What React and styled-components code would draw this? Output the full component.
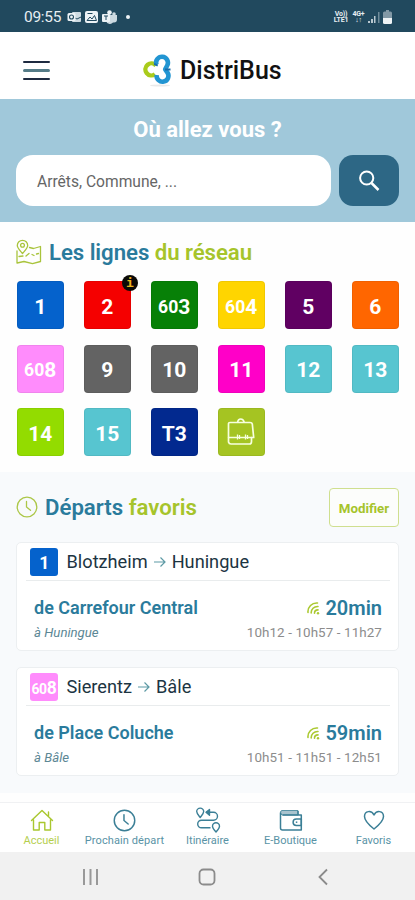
import React from 'react'
import styled, { createGlobalStyle } from 'styled-components'

const GlobalStyle = createGlobalStyle`
  * {
    box-sizing: border-box;
  }
  body {
    margin: 0;
    background: #fff;
    font-family: Roboto, 'Liberation Sans', sans-serif;
  }
`

const Screen = styled.div`
  width: 415px;
  height: 900px;
  display: flex;
  flex-direction: column;
  overflow: hidden;
  background: #fefefe;
`

const StatusBar = styled.div`
  height: 32px;
  padding: 2px 23px 0 24px;
  display: flex;
  align-items: center;
  justify-content: space-between;
  background: #21495e;
  color: #e6eef2;
`
const StatusGroup = styled.div`
  display: flex;
  align-items: center;
  gap: ${(props) => props.$gap}px;
`
const Clock = styled.span`
  width: 38px;
  font-size: 15.5px;
  line-height: 18px;
  letter-spacing: -0.3px;
`
const Volte = styled.div`
  width: ${(props) => props.$width}px;
  font-size: 7px;
  font-weight: 700;
  line-height: 6.5px;
  letter-spacing: -0.2px;
  text-align: center;
`

const Header = styled.header`
  height: 67px;
  padding: 0 23px;
  display: grid;
  grid-template-columns: 120px auto 1fr;
  align-items: center;
  background: #fff;
`
const MenuButton = styled.button`
  width: 27px;
  height: 20px;
  margin-top: 10px;
  padding: 0;
  border: 0;
  background: none;
  display: flex;
  flex-direction: column;
  justify-content: space-between;
`
const MenuLine = styled.span`
  height: 2.4px;
  border-radius: 2px;
  background: ${(props) => props.$color};
`
const Brand = styled.div`
  margin-top: 10px;
  display: flex;
  align-items: center;
  gap: 5px;
  color: #111;
  font-size: 25px;
  font-weight: 500;
  line-height: 30px;
`

const Hero = styled.section`
  height: 123px;
  padding: 17px 16px 0;
  background: #a0c8da;
`
const HeroTitle = styled.h1`
  margin: 0 0 13px;
  color: #fff;
  font-size: 22px;
  font-weight: 700;
  line-height: 27px;
  height: 26px;
  text-align: center;
`
const SearchRow = styled.div`
  display: flex;
  gap: 8px;
`
const SearchInput = styled.div`
  flex: 1;
  height: 51px;
  padding: 2px 21px 0;
  display: flex;
  align-items: center;
  border-radius: 17px;
  background: #fff;
  color: #666;
  font-size: 15.6px;
`
const SearchButton = styled.button`
  width: 60px;
  height: 51px;
  padding: 1px 0 0;
  border: 0;
  border-radius: 14px;
  background: #2d6785;
  color: #fff;
  display: flex;
  align-items: center;
  justify-content: center;
`

const Lines = styled.section`
  height: 250px;
  padding: 16px 16px 0;
`
const SectionTitle = styled.h2`
  margin: 0;
  display: flex;
  align-items: center;
  gap: 7px;
  color: #2a7b9c;
  font-size: 22.2px;
  font-weight: 600;
  line-height: 28px;
  letter-spacing: ${(props) => props.$spacing || 0}px;

  em {
    color: #a6c42b;
    font-style: normal;
  }
`
const LineGrid = styled.div`
  margin: 15px 0 0 0.5px;
  display: grid;
  grid-template-columns: repeat(6, 47.5px);
  justify-content: space-between;
  row-gap: 15.5px;
`
const LineTile = styled.div`
  position: relative;
  height: 48px;
  display: flex;
  align-items: center;
  justify-content: center;
  border-radius: 4px;
  background: ${(props) => props.$color};
  box-shadow: inset 0 0 0 1px rgba(0, 0, 0, 0.06);
  color: #fff;
  padding-top: ${(props) => (props.$icon ? 0 : 3)}px;
  font-size: 21px;
  font-weight: 700;
  line-height: 24px;
`
const Prefix = styled.span`
  font-size: 0.84em;
`
const InfoBadge = styled.span`
  position: absolute;
  top: -6px;
  right: -7px;
  width: 16px;
  height: 16px;
  border-radius: 50%;
  background: #0b0a06;
  color: #e8b51c;
  font-family: 'DejaVu Sans Mono', monospace;
  font-size: 13px;
  font-weight: 700;
  line-height: 15px;
  text-align: center;
`

const Departures = styled.section`
  height: 321px;
  padding: 16px 16px 0;
  background: #f8fafc;
`
const DeparturesHead = styled.div`
  height: 38px;
  margin-bottom: 16px;
  display: flex;
  align-items: center;
  justify-content: space-between;
`
const EditButton = styled.button`
  width: 70px;
  height: 39px;
  padding: 2px 0 0;
  border: 1px solid #cfdf8f;
  border-radius: 4px;
  background: #fcfdfb;
  color: #a6c42b;
  font-family: inherit;
  font-size: 13.3px;
  font-weight: 700;
`
const Card = styled.article`
  height: 109px;
  margin-bottom: 16px;
  padding: 0 8px 0 9px;
  border: 1px solid #eceff1;
  border-radius: 5px;
  background: #fff;
`
const CardHead = styled.div`
  height: 38px;
  padding-left: 4px;
  display: flex;
  align-items: center;
  border-bottom: 1px solid #e9eced;
  color: #1c3442;
  font-size: 18.2px;
  line-height: 22px;
`
const SmallTile = styled.span`
  width: 28px;
  height: 28px;
  margin-right: 8.5px;
  padding-top: 2px;
  display: flex;
  align-items: baseline;
  justify-content: center;
  border-radius: 3px;
  background: ${(props) => props.$color};
  color: #fff;
  font-size: 17.5px;
  font-weight: 700;
  line-height: 26px;
  letter-spacing: -0.3px;

  ${Prefix} {
    font-size: 14px;
  }
`
const Direction = styled.svg`
  width: 12px;
  height: 12px;
  margin: 0 6px;
`
const CardBody = styled.div`
  padding: 15px 8px 0;
  display: grid;
  grid-template-columns: 1fr auto;
  row-gap: 3px;
  align-items: center;
`
const Stop = styled.div`
  color: #2a7b9c;
  font-size: 18px;
  font-weight: 600;
  line-height: 24px;
`
const Wait = styled.div`
  display: flex;
  align-items: center;
  gap: 5px;
  justify-content: flex-end;
  color: #2a7b9c;
  font-size: 20px;
  font-weight: 600;
  line-height: 24px;
`
const Towards = styled.div`
  color: #5c8795;
  font-size: 13.2px;
  font-style: italic;
  line-height: 20px;
`
const Times = styled.div`
  color: #8c8c8c;
  font-size: 13.4px;
  line-height: 20px;
  letter-spacing: 0.1px;
`

const TabBar = styled.nav`
  height: 50px;
  margin-top: 9px;
  padding-top: 5px;
  border-top: 1px solid #f0f1f3;
  display: grid;
  grid-template-columns: repeat(5, 83px);
  background: #fff;
`
const Tab = styled.div`
  display: flex;
  flex-direction: column;
  align-items: center;
  color: ${(props) => (props.$active ? '#a9c72f' : '#3b7f96')};
  font-size: 11px;
  line-height: 12px;
  letter-spacing: ${(props) => props.$spacing || 0}px;
  white-space: nowrap;

  span {
    opacity: 0.85;
  }
`
const TabIcon = styled.div`
  height: 27px;
  padding-bottom: 3px;
  display: flex;
  align-items: center;
`
const SystemBar = styled.div`
  height: 48px;
  padding: 1px 1px 0 0;
  display: flex;
  align-items: center;
  justify-content: center;
  gap: 99px;
  background: #f1f1f1;
`

const lines = [
  { name: '1', color: '#0562cc' },
  { name: '2', color: '#f50000', info: true },
  { prefix: '60', name: '3', color: '#078007' },
  { prefix: '60', name: '4', color: '#ffd500' },
  { name: '5', color: '#600062' },
  { name: '6', color: '#ff6600' },
  { prefix: '60', name: '8', color: '#ff8cfc' },
  { name: '9', color: '#636363' },
  { name: '10', color: '#636363' },
  { name: '11', color: '#ff00c8' },
  { name: '12', color: '#57c5d0' },
  { name: '13', color: '#57c5d0' },
  { name: '14', color: '#93dc00' },
  { name: '15', color: '#57c5d0' },
  { name: 'T3', color: '#02298f' },
  { school: true, color: '#a5c422' },
]

const favorites = [
  {
    line: '1', color: '#0562cc', from: 'Blotzheim', to: 'Huningue',
    stop: 'de Carrefour Central', wait: '20min', times: '10h12 - 10h57 - 11h27',
  },
  {
    prefix: '60', line: '8', color: '#ff8cfc', from: 'Sierentz', to: 'Bâle',
    stop: 'de Place Coluche', wait: '59min', times: '10h51 - 11h51 - 12h51',
  },
]

const StatusIcons = () => (
  <svg width="65" height="16" viewBox="0 0 65 16" fill="none">
    <rect x="6" y="3" width="9" height="10" rx="1" fill="#cddae1" />
    <path d="M7 8l4 2 4-2" stroke="#21495e" />
    <rect x="1.500" y="4" width="8" height="8" rx="1.500" fill="#edf3f6" />
    <circle cx="5.500" cy="8" r="2" stroke="#21495e" strokeWidth="1.100" />
    <rect x="19" y="2" width="13" height="12" rx="2" fill="#edf3f6" />
    <path d="M21 11.500l3-3.500 2 2 2.500-3.500 2 5zM21.500 4.500h5" stroke="#21495e" strokeWidth="1" />
    <circle cx="43.500" cy="3.500" r="2.300" fill="#edf3f6" />
    <circle cx="48" cy="5" r="1.800" fill="#cddae1" />
    <path d="M40 6h11v4.500a3 3 0 0 1-3 3h-1a4 4 0 0 1-7-2z" fill="#cddae1" />
    <rect x="36" y="5" width="8" height="8" rx="1" fill="#edf3f6" />
    <path d="M38 7h4M40 7v4" stroke="#21495e" />
    <circle cx="62" cy="8" r="2" fill="#edf3f6" />
  </svg>
)

const SignalIcon = () => (
  <svg width="12" height="13" viewBox="0 0 12 13">
    <path d="M0 12v-2h2v2zM3 12V8h2v4zM6 12V5h1.500v7z" fill="#b9c8d0" />
    <path d="M10 12V1h1.500v11z" fill="#6f8b9a" />
  </svg>
)

const BatteryIcon = () => (
  <svg width="9" height="14" viewBox="0 0 9 14">
    <path d="M3 0h3v1.500h1.500Q9 1.500 9 3v5H0V3q0-1.500 1.500-1.500H3z" fill="#8299a6" />
    <path d="M0 8h9v4.500Q9 14 7.500 14h-6Q0 14 0 12.500z" fill="#eef3f5" />
  </svg>
)

const Logo = () => (
  <svg width="32" height="33" viewBox="0 0 32 33" fill="none">
    <ellipse cx="17" cy="31.500" rx="10" ry="1" fill="#e9e9e9" />
    <path d="M13 11.500A6 6 0 1 0 12 20.200" stroke="#aacb1b" strokeWidth="4.400" />
    <path d="M13.500 10.800A5.900 5.900 0 1 1 24.200 11.500L22.200 15.400L24.600 18.800A5.900 5.900 0 1 1 13.700 21" stroke="#2295d2" strokeWidth="4.600" strokeLinejoin="round" />
    <path d="M22 15.500h5.500M11.200 9.800l3.500 1.800" stroke="#186caa" strokeWidth="1.800" />
  </svg>
)

const SearchIcon = () => (
  <svg width="22" height="22" viewBox="0 0 22 22" fill="none" stroke="#fff" strokeWidth="2">
    <circle cx="8.700" cy="8" r="6.600" />
    <path d="M13.500 13l7 7" strokeWidth="2.500" />
  </svg>
)

const MapIcon = () => (
  <svg width="26" height="26" viewBox="0 0 26 26" fill="none" stroke="#a9c43c" strokeWidth="1.300" strokeLinejoin="round" strokeLinecap="round">
    <path d="M6.500 14.500C3.500 11 1.300 9 1.300 6.500a5.200 5.200 0 0 1 10.400 0c0 2.500-2.200 4.500-5.200 8z" />
    <circle cx="6.500" cy="6.200" r="1.900" />
    <path d="M1 12v12l7-1.500 8.500 2.200 8-2.200V7.500l-7 2-4-1" />
    <path d="M3 17.500l4-.5M10 17l3-2.500M16 15.500l2 1M20.500 15l2-.5" />
  </svg>
)

const ClockIcon = ({ size = 22, color = '#acc748', width = 1.3 }) => (
  <svg width={size} height={size} viewBox="0 0 22 22" fill="none" stroke={color} strokeWidth={width} strokeLinecap="round">
    <circle cx="11" cy="11" r="9.800" />
    <path d="M10.500 5.500V11l4 3.300" />
  </svg>
)

const SchoolBagIcon = () => (
  <svg width="28" height="28" viewBox="0 0 28 28" fill="none" stroke="#f7ffdf" strokeWidth="1.700" strokeLinejoin="round">
    <path d="M10.500 4.500Q11 1 13.700 1t3.500 3.500" />
    <path d="M1.500 19.500V5.500Q1.500 4.500 3 4.500h20q2 0 2.300 1.500l1.400 13.500h-2.500" />
    <path d="M3 19.500h21.500v4q0 2.500-2 2.500H4q-2 0-2.500-2v-4.500z" />
    <path d="M8.500 19.500M10.500 16.500v5M12.500 17v4M18.500 16.500v5M20.500 17v4" strokeWidth="1.300" />
  </svg>
)

const LiveIcon = () => (
  <svg width="13" height="14" viewBox="0 0 13 14" fill="none" stroke="#abc931" strokeWidth="1.600" strokeLinecap="round">
    <path d="M1 11.500C.5 6 5 1.500 10.500 2M4.200 12c-.2-3.800 2.800-6.700 6.800-6.500M7.500 12.300c0-2 1.400-3.400 3.500-3.400" />
    <circle cx="11" cy="12.200" r="1.200" fill="#abc931" stroke="none" />
  </svg>
)

const HomeIcon = () => (
  <svg width="24" height="24" viewBox="0 0 24 24" fill="none" stroke="currentColor" strokeWidth="1.400" strokeLinejoin="round" strokeLinecap="round">
    <path d="M1.500 12.500L12 2.500l10.500 10M3.500 11.500v10.500h5.700v-7.500h5.600V22h5.700V11.500M18.500 4v4" />
  </svg>
)

const RouteIcon = () => (
  <svg width="26" height="26" viewBox="0 0 26 26" fill="none" stroke="currentColor" strokeWidth="1.400" strokeLinejoin="round">
    <path d="M5.200 10.500C3 7.800 1.700 6.500 1.700 4.600a3.500 3.500 0 0 1 7 0c0 1.900-1.300 3.200-3.500 5.900z" />
    <path d="M21 25c-2.200-2.600-3.500-4-3.500-5.800a3.500 3.500 0 0 1 7 0c0 1.800-1.300 3.200-3.500 5.800z" />
    <path d="M11 5.200h7.500a4 4 0 0 1 0 8H6.500a3.700 3.700 0 0 0 0 7.600h9" />
    <path d="M14.500 2.500l-3.500 2.700 3.500 3z" fill="currentColor" />
  </svg>
)

const WalletIcon = () => (
  <svg width="24" height="24" viewBox="0 0 24 24" fill="none" stroke="currentColor" strokeWidth="1.500" strokeLinejoin="round">
    <path d="M3 2.500h16v4.500H3.500Q1.500 6.500 1.500 4.500T3 2.500z" fill="#a9c3ce" strokeWidth="0.800" />
    <path d="M1.500 4.500v15.500q0 2 2 2h18.800V7H3.500M19 3v4" />
    <path d="M22.300 11h-5a3.200 3.200 0 0 0 0 6.400h5z" />
    <path d="M16.800 14.200h1.500" />
  </svg>
)

const HeartIcon = () => (
  <svg width="24" height="24" viewBox="0 0 24 24" fill="none" stroke="currentColor" strokeWidth="1.500" strokeLinejoin="round">
    <path d="M12 21C7 17 2.500 12.800 2.500 8.500 2.500 2.700 9.500 1.800 12 7c2.500-5.200 9.500-4.300 9.500 1.500 0 4.300-4.500 8.500-9.500 12.500z" />
  </svg>
)

const Favorite = (props) => {
  return (
    <Card>
      <CardHead>
        <SmallTile $color={props.color}>
          {props.prefix && <Prefix>{props.prefix}</Prefix>}
          {props.line}
        </SmallTile>
        {props.from}
        <Direction viewBox="0 0 12 12" fill="none" stroke="#5d9aa5" strokeWidth="1.200">
          <path d="M0 6h11M6.500 1.500L11 6l-4.500 4.500" />
        </Direction>
        {props.to}
      </CardHead>
      <CardBody>
        <Stop>{props.stop}</Stop>
        <Wait><LiveIcon />{props.wait}</Wait>
        <Towards>à {props.to}</Towards>
        <Times>{props.times}</Times>
      </CardBody>
    </Card>
  )
}

const App = () => {
  return (
    <Screen>
      <GlobalStyle />
      <StatusBar>
        <StatusGroup $gap={4}>
          <Clock>09:55</Clock>
          <StatusIcons />
        </StatusGroup>
        <StatusGroup $gap={3}>
          <Volte $width={16}>Vo))<br />LTE1</Volte>
          <Volte $width={13}>4G+<br />↓↑</Volte>
          <SignalIcon />
          <BatteryIcon />
        </StatusGroup>
      </StatusBar>
      <Header>
        <MenuButton aria-label="Menu">
          <MenuLine $color="#1e2a40" />
          <MenuLine $color="#557c88" />
          <MenuLine $color="#1e2a40" />
        </MenuButton>
        <Brand><Logo />DistriBus</Brand>
      </Header>
      <Hero>
        <HeroTitle>Où allez vous ?</HeroTitle>
        <SearchRow>
          <SearchInput>Arrêts, Commune, ...</SearchInput>
          <SearchButton aria-label="Rechercher"><SearchIcon /></SearchButton>
        </SearchRow>
      </Hero>
      <Lines>
        <SectionTitle $spacing={-0.05}>
          <MapIcon />
          <span>Les lignes <em>du réseau</em></span>
        </SectionTitle>
        <LineGrid>
          {lines.map((line, i) => (
            <LineTile key={i} $color={line.color} $icon={line.school}>
              {line.prefix && <Prefix>{line.prefix}</Prefix>}
              {line.school ? <SchoolBagIcon /> : line.name}
              {line.info && <InfoBadge>i</InfoBadge>}
            </LineTile>
          ))}
        </LineGrid>
      </Lines>
      <Departures>
        <DeparturesHead>
          <SectionTitle>
            <ClockIcon />
            <span>Départs <em>favoris</em></span>
          </SectionTitle>
          <EditButton>Modifier</EditButton>
        </DeparturesHead>
        {favorites.map((favorite) => (
          <Favorite key={favorite.line} {...favorite} />
        ))}
      </Departures>
      <TabBar>
        <Tab $active><TabIcon><HomeIcon /></TabIcon><span>Accueil</span></Tab>
        <Tab $spacing={0.1}>
          <TabIcon><ClockIcon size={23} color="currentColor" width={1.4} /></TabIcon>
          <span>Prochain départ</span>
        </Tab>
        <Tab><TabIcon><RouteIcon /></TabIcon><span>Itinéraire</span></Tab>
        <Tab><TabIcon><WalletIcon /></TabIcon><span>E-Boutique</span></Tab>
        <Tab><TabIcon><HeartIcon /></TabIcon><span>Favoris</span></Tab>
      </TabBar>
      <SystemBar>
        <svg width="17" height="16" viewBox="0 0 17 16" stroke="#999" strokeWidth="2">
          <path d="M2 0v16M8.500 0v16M15 0v16" />
        </svg>
        <svg width="18" height="18" viewBox="0 0 18 18" fill="none" stroke="#8b8b8b" strokeWidth="1.800">
          <rect x="1.500" y="1.500" width="15" height="15" rx="4" />
        </svg>
        <svg width="17" height="18" viewBox="0 0 17 18" fill="none" stroke="#8b8b8b" strokeWidth="1.800">
          <path d="M12 1.500L4.500 9l7.500 7.500" />
        </svg>
      </SystemBar>
    </Screen>
  )
}

export default App
